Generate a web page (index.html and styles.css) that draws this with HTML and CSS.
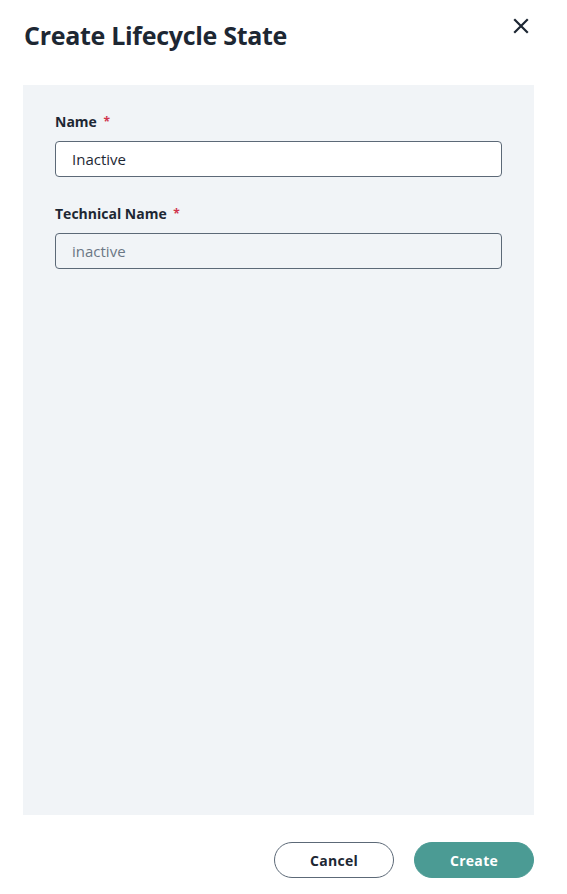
FILE: index.html
```html
<!DOCTYPE html>
<html lang="en">
<head>
<meta charset="utf-8">
<title>Create Lifecycle State</title>
<link rel="stylesheet" href="styles.css">
</head>
<body>
<div class="dialog">
  <header class="header">
    <h1 class="title">Create Lifecycle State</h1>
    <button class="close" aria-label="Close">
      <svg width="16" height="16" viewBox="0 0 16 16"><path d="M2 2L14 14M14 2L2 14" stroke="#1d2733" stroke-width="2.2" stroke-linecap="square"/></svg>
    </button>
  </header>
  <div class="panel">
    <div class="field">
      <label class="label">Name <span class="req">*</span></label>
      <div class="input">Inactive</div>
    </div>
    <div class="field">
      <label class="label">Technical Name <span class="req">*</span></label>
      <div class="input disabled">inactive</div>
    </div>
  </div>
  <footer class="footer">
    <button class="btn secondary">Cancel</button>
    <button class="btn primary">Create</button>
  </footer>
</div>
</body>
</html>
```

FILE: styles.css
```css
* { box-sizing: border-box; }
html, body { margin: 0; padding: 0; background: #ffffff; }
body { font-family: "Open Sans", "Noto Sans", sans-serif; color: #1d2733; }
.dialog { width: 567px; height: 894px; padding: 0 33px 16px 23px; display: flex; flex-direction: column; }
.header { display: flex; justify-content: space-between; align-items: flex-start; height: 85px; }
.title { margin: 19px 0 0 1px; font-size: 25px; font-weight: 700; letter-spacing: -0.3px; line-height: 32px; color: #1d2733; }
.close { margin: 14px 1px 0 0; width: 24px; height: 24px; padding: 0; border: 0; background: transparent; display: flex; align-items: center; justify-content: center; }
.panel { background: #f1f4f7; height: 730px; padding: 27px 32px 0 32px; display: flex; flex-direction: column; gap: 27px; }
.field { display: flex; flex-direction: column; gap: 9px; }
.label { font-size: 14px; font-weight: 700; line-height: 20px; color: #1d2733; }
.req { color: #d0344d; font-size: 12px; margin-left: 3px; vertical-align: 1px; }
.input { height: 36px; border: 1px solid #5c6977; border-radius: 4px; background: #ffffff; padding: 0 16px; font-size: 15px; line-height: 34px; color: #1d2733; }
.input.disabled { background: #f1f4f7; color: #6b7785; }
.footer { display: flex; justify-content: flex-end; gap: 20px; margin-top: 27px; }
.btn { width: 120px; height: 36px; border-radius: 18px; font-family: inherit; font-size: 14px; font-weight: 700; letter-spacing: 0.3px; cursor: pointer; }
.btn.secondary { background: #ffffff; border: 1px solid #5c6977; color: #1d2733; }
.btn.primary { background: #4b9b94; border: 1px solid #4b9b94; color: #ffffff; }
```
